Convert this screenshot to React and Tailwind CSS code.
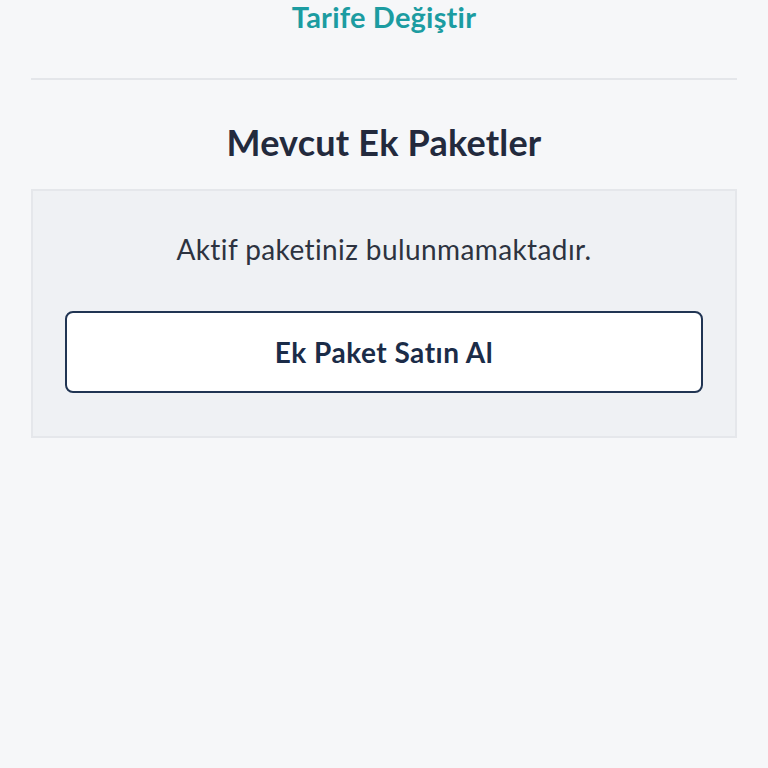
export default function App() {
  return (
    <div className="min-h-[768px] bg-[#f6f7f9] font-['Lato','Noto_Sans',sans-serif] px-[31px]">
      <div className="flex justify-center items-start h-[78px] pt-[1px]">
        <button className="text-[29px] leading-[32px] font-bold text-[#1c9ca1] tracking-[0.2px]">Tarife Değiştir</button>
      </div>
      <div className="border-t-2 border-[#e4e6ea]" />
      <h2 className="text-center text-[36px] leading-[40px] font-bold text-[#232a3d] mt-[42px] mb-[27px] tracking-[0.2px]">Mevcut Ek Paketler</h2>
      <div className="bg-[#eff1f4] border-2 border-[#e5e7eb] px-[32px] pt-[40px] pb-[43px] flex flex-col items-center">
        <p className="text-[28px] leading-[36px] text-[#2d3340] tracking-[0.4px]">Aktif paketiniz bulunmamaktadır.</p>
        <button className="mt-[44px] w-full h-[82px] bg-white border-2 border-[#213553] rounded-[8px] text-[28px] font-bold text-[#1b2c48] tracking-[0.5px]">
          Ek Paket Satın Al
        </button>
      </div>
    </div>
  )
}
